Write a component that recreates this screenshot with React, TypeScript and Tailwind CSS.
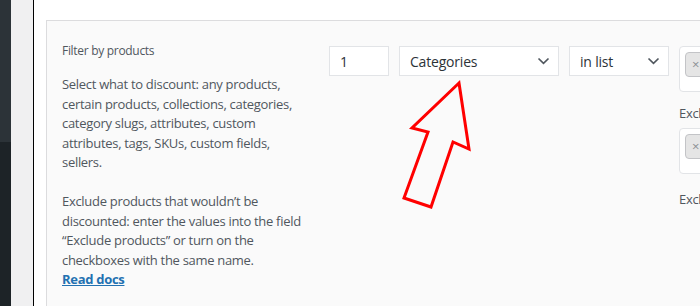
import React from 'react';

const font = { fontFamily: '"Open Sans", "Noto Sans", sans-serif' };

const Chevron: React.FC = () => (
    <svg width="13" height="8" viewBox="0 0 13 8" className="shrink-0">
        <path d="M1.5 1.5 L6.5 6.3 L11.5 1.5" fill="none" stroke="#50575e" strokeWidth="1.7" />
    </svg>
);

const Select: React.FC<{ value: string; width: string }> = ({ value, width }) => (
    <div className={`${width} h-[30px] shrink-0 flex items-center justify-between pl-[10px] pr-[8px] bg-white border border-[#e2e4e7] text-[14px] tracking-[-0.2px] text-[#2c3338]`}>
        <span>{value}</span>
        <Chevron />
    </div>
);

const TagBox: React.FC = () => (
    <div className="w-[120px] h-[46px] rounded-[4px] border border-[#e2e4e7] bg-white pt-[5px] pl-[5px]">
        <div className="w-[40px] h-[25px] rounded-[4px] border border-[#c3c4c7] bg-[#e5e5e5] flex items-center pl-[6px] text-[13px] text-[#8c8f94]">
            ×
        </div>
    </div>
);

const App: React.FC = () => {
    return (
        <div className="relative flex w-[700px] h-[306px] overflow-hidden bg-white" style={font}>
            {/* admin sidebar edge */}
            <div className="w-[11px] shrink-0 flex flex-col">
                <div className="h-[142px] bg-[#2c3338]" />
                <div className="flex-1 bg-[#1d2327]" />
            </div>
            <div className="w-[22px] shrink-0 bg-[#f0f0f1]" />
            <div className="w-px shrink-0 bg-black" />

            <div className="flex-1 pl-[12px] pt-[20px]">
                <div className="h-[320px] w-[700px] border-l border-t border-[#dcdcde] bg-[#fafafa] pl-[15px] pt-[21px] flex gap-[22px]">
                    <div className="w-[245px] shrink-0 text-[#50575e]">
                        <div className="text-[12px] leading-[17px] tracking-[-0.3px]">Filter by products</div>
                        <p className="mt-[16px] text-[13px] leading-[19.5px] tracking-[-0.3px] whitespace-nowrap">
                            Select what to discount: any products,<br />
                            certain products, collections, categories,<br />
                            category slugs, attributes, custom<br />
                            attributes, tags, SKUs, custom fields,<br />
                            sellers.
                        </p>
                        <p className="mt-[19.5px] text-[13px] leading-[19.5px] tracking-[-0.3px] whitespace-nowrap">
                            Exclude products that wouldn’t be<br />
                            discounted: enter the values into the field<br />
                            “Exclude products” or turn on the<br />
                            checkboxes with the same name.<br />
                            <a href="#" className="font-bold text-[#2271b1] underline">Read docs</a>
                        </p>
                    </div>

                    <div className="pt-[4px] flex gap-[10px] items-start">
                        <div className="w-[60px] h-[30px] shrink-0 flex items-center pl-[10px] bg-white border border-[#e2e4e7] text-[14px] text-[#2c3338]">
                            1
                        </div>
                        <Select value="Categories" width="w-[160px]" />
                        <Select value="in list" width="w-[100px]" />
                        <div className="shrink-0 flex flex-col">
                            <TagBox />
                            <div className="mt-[11px] text-[13px] leading-[20px] tracking-[-0.3px] text-[#50575e] whitespace-nowrap">Exclude products</div>
                            <div className="mt-[5px]">
                                <TagBox />
                            </div>
                            <div className="mt-[15px] text-[13px] leading-[20px] tracking-[-0.3px] text-[#50575e] whitespace-nowrap">Exclude products</div>
                        </div>
                    </div>
                </div>
            </div>

            {/* red annotation arrow */}
            <svg className="absolute inset-0 pointer-events-none" width="700" height="306">
                <polygon
                    points="459,83 469,149 453,142 431,207 404,198 428,132 412,128"
                    fill="none"
                    stroke="#ff0000"
                    strokeWidth="3"
                    strokeLinejoin="miter"
                />
            </svg>
        </div>
    );
};

export default App;
